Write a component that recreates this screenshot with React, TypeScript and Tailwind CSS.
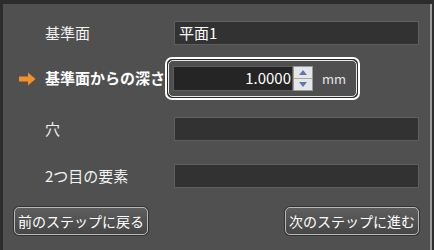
import React from 'react';

const font = { fontFamily: '"Noto Sans CJK JP", "Noto Sans", sans-serif' };

function Arrow() {
  return (
    <svg width="17" height="14" viewBox="0 0 17 14" className="block">
      <path d="M0 4.5 H9 V0.5 L16.5 7 L9 13.5 V9.5 H0 Z" fill="#f39126" />
    </svg>
  );
}

function Spinner() {
  return (
    <div className="flex h-[25px] w-[20px] flex-col border border-[#9a9a9a] bg-[#e6e6e6]">
      <div className="flex flex-1 items-center justify-center border-b border-[#a8a8a8]">
        <svg width="8" height="5" viewBox="0 0 8 5">
          <path d="M0 5 L4 0 L8 5 Z" fill="#5a78b8" />
        </svg>
      </div>
      <div className="flex flex-1 items-center justify-center">
        <svg width="8" height="5" viewBox="0 0 8 5">
          <path d="M0 0 L4 5 L8 0 Z" fill="#5a78b8" />
        </svg>
      </div>
    </div>
  );
}

function Row({ label, value }: { label: string; value?: string }) {
  return (
    <div className="flex h-[24px] items-center">
      <div className="w-[42px]" />
      <div className="w-[129px] text-[15px] text-[#f2f2f2]">{label}</div>
      <div className="flex h-[24px] w-[245px] items-center border border-[#5e5e5e] bg-[#323232] px-[4px] text-[15px] text-white">
        {value}
      </div>
    </div>
  );
}

function NavButton({ children }: { children: React.ReactNode }) {
  return (
    <button className="flex h-[28px] items-center rounded-[5px] border border-[#b8b8b8] bg-gradient-to-b from-[#5e5e5e] to-[#464646] px-[3px] text-[14px] leading-none text-white shadow-[0_0_0_1px_#333]">
      {children}
    </button>
  );
}

export default function App() {
  return (
    <div className="flex h-[250px] w-[434px] bg-[#2c2c2c] pt-[4px] pl-[3px]" style={font}>
      <div className="flex w-[427px] flex-col bg-[#505050] pt-[17px]">
        <Row label="基準面" value="平面1" />

        <div className="mt-[12px] flex h-[43px] items-center">
          <div className="flex w-[42px] pl-[16px]">
            <Arrow />
          </div>
          <div className="w-[120px] whitespace-nowrap text-[15px] font-bold text-white">
            基準面からの深さ
          </div>
          <div className="flex h-[43px] w-[195px] rounded-[7px] border-2 border-white bg-[#2a2a2a] p-[1px]">
            <div className="flex flex-1 items-center rounded-[5px] border border-[#e8e8e8] bg-[#4f4f4f] pl-[4px]">
              <div className="flex h-[25px] w-[120px] items-center justify-end border border-[#5e5e5e] bg-[#252525] pr-[1px] text-[15px] text-white">
                1.0000
              </div>
              <Spinner />
              <span className="ml-[9px] text-[13px] text-[#e6e6e6]">mm</span>
            </div>
          </div>
        </div>

        <div className="mt-[17px]">
          <Row label="穴" />
        </div>
        <div className="mt-[23px]">
          <Row label="2つ目の要素" />
        </div>

        <div className="mt-[19px] flex justify-between pl-[11px] pr-[11px]">
          <NavButton>前のステップに戻る</NavButton>
          <NavButton>次のステップに進む</NavButton>
        </div>
      </div>
      <div className="w-[2px] bg-[#9c9c9c]" />
    </div>
  );
}
